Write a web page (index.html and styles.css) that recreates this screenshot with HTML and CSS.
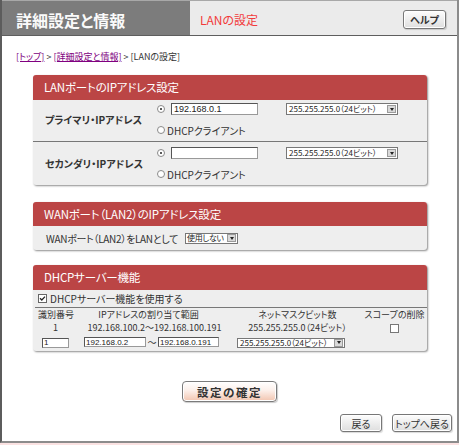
FILE: index.html
```html
<!DOCTYPE html>
<html lang="ja">
<head>
<meta charset="utf-8">
<title>LANの設定</title>
<link rel="stylesheet" href="styles.css">
</head>
<body>
<div class="frame">
  <header class="hd">
    <div class="hd-title">詳細設定と情報</div>
    <div class="hd-sub">
      <span class="hd-page">LANの設定</span>
      <button class="btn btn-help">ヘルプ</button>
    </div>
  </header>
  <main class="content">
    <nav class="crumb"><a href="#">[トップ]</a> &gt; <a href="#">[詳細設定と情報]</a> &gt; [LANの設定]</nav>

    <section class="card">
      <h2 class="card-hd">LANポートのIPアドレス設定</h2>
      <div class="card-bd">
        <div class="iprow iprow-first">
          <div class="iplabel">プライマリ・IPアドレス</div>
          <div class="ipctl">
            <div class="line"><span class="radio on"></span><input class="tx tx-ip" value="192.168.0.1"><span class="sel sel-mask"><span class="val">255.255.255.0（24ビット）</span><span class="arr"></span></span></div>
            <div class="line"><span class="radio radio-dhcp"></span><span>DHCPクライアント</span></div>
          </div>
        </div>
        <div class="iprow iprow-second">
          <div class="iplabel">セカンダリ・IPアドレス</div>
          <div class="ipctl">
            <div class="line"><span class="radio on"></span><input class="tx tx-ip" value=""><span class="sel sel-mask"><span class="val">255.255.255.0（24ビット）</span><span class="arr"></span></span></div>
            <div class="line"><span class="radio radio-dhcp"></span><span>DHCPクライアント</span></div>
          </div>
        </div>
      </div>
    </section>

    <section class="card card-wan">
      <h2 class="card-hd card-hd-short">WANポート（LAN2）のIPアドレス設定</h2>
      <div class="wan-bd">
        <span class="wan-text">WANポート（LAN2）をLANとして</span>
        <span class="sel sel-use"><span class="val">使用しない</span><span class="arr"></span></span>
      </div>
    </section>

    <section class="card card-dhcp">
      <h2 class="card-hd">DHCPサーバー機能</h2>
      <div class="dhcp-bd">
        <div class="dhcp-use"><span class="chk"><svg viewBox="0 0 7 7" width="7" height="7"><path d="M1 3.2 L2.8 5 L6 1.6" fill="none" stroke="#222" stroke-width="1.3"/></svg></span><span>DHCPサーバー機能を使用する</span></div>
        <table class="scope">
          <colgroup><col class="c1"><col class="c2"><col class="c3"><col class="c4"></colgroup>
          <tr>
            <th class="th-id">識別番号</th>
            <th class="th-range">IPアドレスの割り当て範囲</th>
            <th>ネットマスクビット数</th>
            <th>スコープの削除</th>
          </tr>
          <tr>
            <td>1</td>
            <td>192.168.100.2〜192.168.100.191</td>
            <td>255.255.255.0（24ビット）</td>
            <td><span class="chk chk-off"></span></td>
          </tr>
          <tr class="row-edit">
            <td><input class="tx tx-id" value="1"></td>
            <td class="td-range"><input class="tx tx-range" value="192.168.0.2"><span class="tilde">〜</span><input class="tx tx-range2" value="192.168.0.191"></td>
            <td class="td-mask"><span class="sel sel-dmask"><span class="val">255.255.255.0（24ビット）</span><span class="arr"></span></span></td>
            <td></td>
          </tr>
        </table>
      </div>
    </section>

    <div class="confirm-wrap"><button class="btn-confirm">設定の確定</button></div>
    <div class="navbtns">
      <button class="btn btn-back">戻る</button>
      <button class="btn btn-top">トップへ戻る</button>
    </div>
  </main>
</div>
<div class="under"></div>
</body>
</html>
```
FILE: styles.css
```css
html, body {
  margin: 0;
  padding: 0;
}
body {
  width: 460px;
  height: 445px;
  overflow: hidden;
  background: #fff;
  color: #333;
  font-family: "Noto Sans CJK JP", "Liberation Sans", sans-serif;
  font-feature-settings: "palt";
  font-size: 10px;
}
.frame {
  width: 459px;
  height: 443px;
  box-sizing: border-box;
  border-left: 2px solid #5c5c5c;
  border-right: 2px solid #8c8c8c;
  border-bottom: 2px solid #8c8c8c;
  display: flex;
  flex-direction: column;
}
.under {
  width: 459px;
  height: 2px;
  background: #fbe2e2;
}

/* header */
.hd {
  display: flex;
  height: 36px;
  box-sizing: border-box;
  border-top: 1px solid #a8a8a8;
  border-bottom: 1px solid #5e5e5e;
}
.hd-title {
  width: 188px;
  box-sizing: border-box;
  background: #7c7c7c;
  color: #fafafa;
  font-size: 16px;
  font-weight: bold;
  padding: 3px 0 0 14px;
  display: flex;
  align-items: center;
}
.hd-sub {
  flex: 1;
  background: #ebebeb;
  display: flex;
  align-items: center;
  padding: 3px 11px 0 10px;
}
.hd-page {
  color: #f23b3b;
  font-size: 12px;
}
.btn {
  font-family: inherit;
  font-feature-settings: "palt";
  font-size: 10px;
  color: #333;
  border: 1px solid #777;
  border-radius: 3px;
  background: linear-gradient(#fdfdfd, #dedede);
  box-shadow: inset 0 0 0 1px #fff, 1px 1px 1px rgba(0, 0, 0, 0.15);
  padding: 0;
  height: 18px;
  cursor: pointer;
}
.btn-help {
  margin-left: auto;
  width: 43px;
  height: 19px;
  font-weight: bold;
}

/* content */
.content {
  flex: 1;
  display: flex;
  flex-direction: column;
  padding-top: 15px;
}
.crumb {
  padding-left: 14px;
  height: 12px;
  line-height: 12px;
  font-size: 9px;
  color: #333;
}
.crumb a {
  color: #800080;
  text-decoration: underline;
}

.card {
  margin: 12px 0 0 31px;
  width: 394px;
  background: #eeeeee;
  border-radius: 3px;
  box-shadow: 1px 1px 2px rgba(0, 0, 0, 0.45);
}
.card-wan { margin-top: 17px; }
.card-dhcp { margin-top: 15px; }
.card-hd {
  margin: 0;
  height: 25px;
  line-height: 25px;
  padding-left: 11px;
  background: #bb4545;
  color: #fff;
  font-size: 11.5px;
  font-weight: normal;
  letter-spacing: -0.2px;
  border-radius: 3px 3px 0 0;
}
.card-hd-short {
  height: 24px;
  line-height: 24px;
}

/* LAN rows */
.iprow {
  display: flex;
  align-items: center;
}
.iprow-first {
  padding: 3px 0 5px;
  border-bottom: 1px solid #777;
}
.iprow-second {
  padding: 5px 0 5px;
}
.iplabel {
  width: 124px;
  box-sizing: border-box;
  padding-left: 12px;
  font-weight: bold;
  font-size: 10px;
}
.ipctl {
  display: flex;
  flex-direction: column;
  gap: 9px;
}
.line {
  display: flex;
  align-items: center;
  height: 12px;
}

.radio {
  width: 6px;
  height: 6px;
  border: 1px solid #8a8a8a;
  border-radius: 50%;
  background: #fff;
  display: inline-flex;
  align-items: center;
  justify-content: center;
  margin-right: 6px;
  flex: none;
}
.radio.on::after {
  content: "";
  width: 2px;
  height: 2px;
  border-radius: 50%;
  background: #222;
}
.radio-dhcp {
  margin-right: 2px;
}

.tx {
  box-sizing: border-box;
  height: 12px;
  margin: 0;
  padding: 0 2px;
  border: 1px solid;
  border-color: #555 #999 #999 #555;
  background: #fff;
  color: #222;
  font: 9px "Liberation Sans", sans-serif;
  outline: none;
}
.tx-ip {
  width: 87px;
  margin-right: 28px;
}

.sel {
  display: inline-flex;
  align-items: center;
  box-sizing: border-box;
  height: 12px;
  border: 1px solid #777;
  background: #fff;
  font-size: 8px;
  color: #222;
  flex: none;
}
.sel .val {
  flex: 1;
  padding-left: 2px;
  white-space: nowrap;
  overflow: hidden;
  line-height: 10px;
}
.sel .arr {
  width: 9px;
  height: 8px;
  box-sizing: border-box;
  background: #d9d9d9;
  border: 1px solid #9a9a9a;
  margin: 0 1px 0 2px;
  display: flex;
  align-items: center;
  justify-content: center;
  flex: none;
}
.sel .arr::after {
  content: "";
  border-top: 3px solid #222;
  border-left: 2px solid transparent;
  border-right: 2px solid transparent;
}
.sel-mask {
  width: 112px;
}

/* WAN */
.wan-bd {
  height: 24px;
  display: flex;
  align-items: center;
  padding-left: 13px;
  font-size: 10px;
}
.wan-text {
  letter-spacing: -0.3px;
}
.sel-use {
  width: 53px;
  height: 11px;
  margin-left: 7px;
}
.sel-use .val {
  letter-spacing: -0.3px;
  padding-left: 1px;
}

/* DHCP */
.dhcp-bd {
  padding-bottom: 2px;
}
.dhcp-use {
  height: 17px;
  display: flex;
  align-items: center;
  padding-left: 5px;
  gap: 3px;
  font-size: 10px;
}
.chk {
  width: 7px;
  height: 7px;
  border: 1px solid #666;
  background: #fff;
  display: inline-flex;
  flex: none;
}
.chk svg { display: block; }
.chk-off {
  vertical-align: middle;
  border-color: #777;
}
.scope {
  border-collapse: collapse;
  table-layout: fixed;
  width: 392px;
  margin-left: 2px;
  font-size: 9px;
}
.c1 { width: 41px; }
.c2 { width: 157px; }
.c3 { width: 129px; }
.c4 { width: 65px; }
.scope th {
  border-top: 1px solid #777;
  font-weight: normal;
  height: 13px;
  line-height: 13px;
  padding: 0;
  text-align: center;
  white-space: nowrap;
}
.scope th.th-id {
  text-align: left;
  padding-left: 3px;
}
.scope th.th-range {
  padding-right: 12px;
}
.scope td {
  height: 13px;
  line-height: 13px;
  padding: 0;
  text-align: center;
  white-space: nowrap;
}
.row-edit td {
  height: 15px;
  vertical-align: middle;
}
.scope .tx {
  font-size: 8px;
  height: 10px;
  vertical-align: middle;
  padding: 0 1px;
}
.tx-id {
  width: 27px;
}
.scope td.td-range {
  text-align: left;
  padding-left: 8px;
}
.tx-range {
  width: 62px;
}
.tx-range2 {
  width: 61px;
}
.tilde {
  display: inline-block;
  width: 12px;
  text-align: center;
  vertical-align: middle;
}
.scope td.td-mask {
  text-align: left;
  padding-left: 4px;
}
.sel-dmask {
  width: 108px;
  height: 10px;
  vertical-align: middle;
}
.sel-dmask .arr {
  height: 8px;
}

/* buttons */
.confirm-wrap {
  margin-top: 30px;
  display: flex;
  justify-content: center;
}
.btn-confirm {
  width: 95px;
  height: 21px;
  padding: 0;
  border: 1px solid #7b7b7b;
  border-radius: 4px;
  background: linear-gradient(#ffffff 0%, #fcefe9 45%, #f2c5b0 100%);
  box-shadow: inset 0 0 0 1px #fff, 1px 1px 1px rgba(0, 0, 0, 0.2);
  font-family: inherit;
  font-size: 11.5px;
  font-weight: bold;
  letter-spacing: 1.5px;
  color: #333;
  cursor: pointer;
}
.navbtns {
  margin-top: 12px;
  display: flex;
  justify-content: flex-end;
  gap: 10px;
  padding-right: 5px;
}
.btn-back { width: 42px; }
.btn-top { width: 60px; }
```
